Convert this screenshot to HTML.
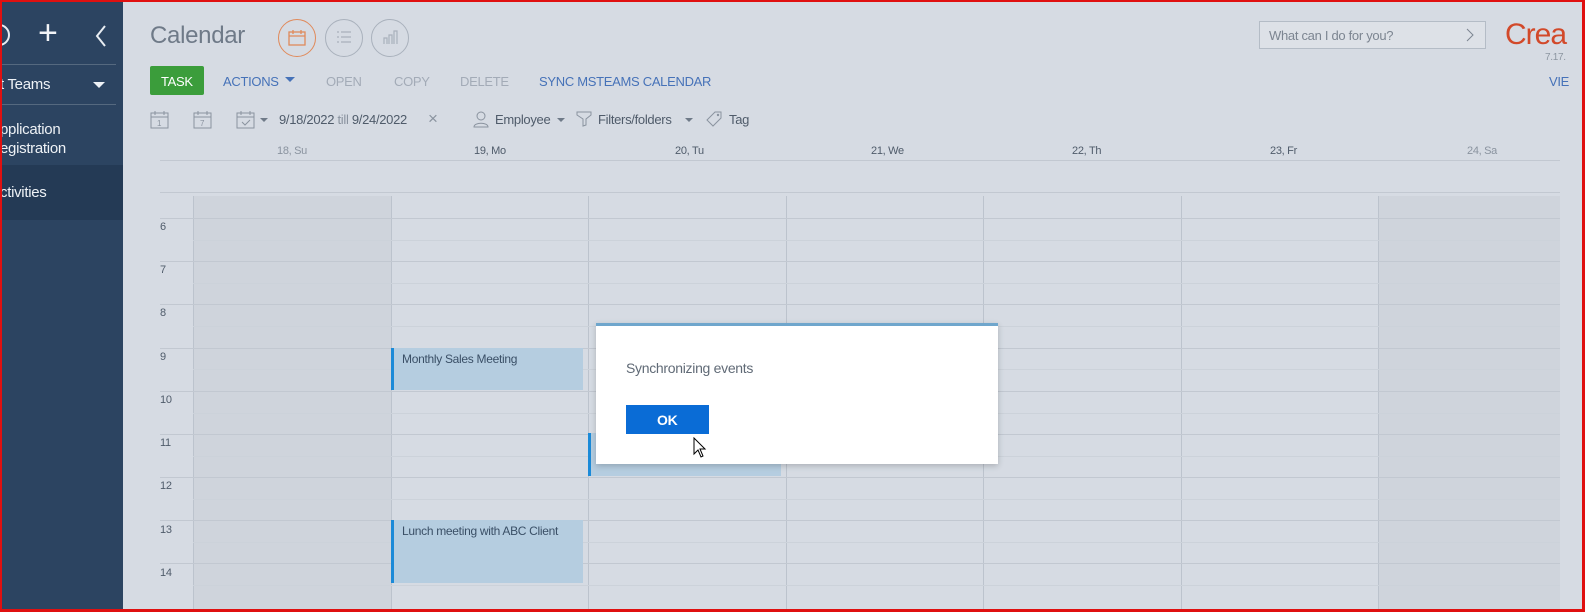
<!DOCTYPE html>
<html><head><meta charset="utf-8"><style>
*{margin:0;padding:0;box-sizing:border-box}
body{width:1585px;height:612px;overflow:hidden;position:relative;background:#d6dbe3;font-family:"Liberation Sans",sans-serif;letter-spacing:-0.3px}
.abs{position:absolute}
.side{left:0;top:0;width:123px;height:612px;background:#2c4461}
.t{position:absolute;white-space:nowrap}
.vl{position:absolute;width:1px;background:#bcc3cd}
.hl{position:absolute;height:1px;background:#c2c8d1}
.hh{position:absolute;height:1px;background:#ccd2da}
.ev{position:absolute;background:#b5cde0;border-left:3px solid #1b8ad8;font-size:12px;color:#3a4f66;padding:4px 8px}
</style></head><body>
<div class="abs side"></div>
<div class="abs" style="left:0;top:165px;width:123px;height:55px;background:#243a55"></div>
<div class="abs" style="left:0;top:64px;width:116px;height:1px;background:#55697f"></div>
<div class="abs" style="left:0;top:104px;width:116px;height:1px;background:#55697f"></div>
<div class="abs" style="left:-12px;top:24px;width:22px;height:22px;border:2px solid #e8edf2;border-radius:50%"></div>
<div class="t" style="left:38px;top:14px;font-size:34px;color:#f2f4f7;font-weight:300">+</div>
<svg class="abs" style="left:94px;top:24px" width="14" height="24"><path d="M11 2 L3 12 L11 22" stroke="#e8edf2" stroke-width="2" fill="none"/></svg>
<div class="t" style="left:0;top:76px;font-size:15px;color:#eef2f6">t Teams</div>
<svg class="abs" style="left:93px;top:82px" width="12" height="8"><path d="M0 0H12L6 6Z" fill="#eef2f6"/></svg>
<div class="t" style="left:0;top:120px;font-size:15px;color:#eef2f6;line-height:19px">pplication<br>egistration</div>
<div class="t" style="left:0;top:184px;font-size:15px;color:#eef2f6">ctivities</div>

<div class="t" style="left:150px;top:22px;font-size:24px;color:#6f7a88;font-weight:300">Calendar</div>
<div class="abs" style="left:278px;top:19px;width:38px;height:38px;border:1px solid #e08a5b;border-radius:50%"></div>
<svg class="abs" style="left:287px;top:28px" width="20" height="20"><rect x="2" y="4" width="16" height="13" fill="none" stroke="#e08a5b" stroke-width="1.3"/><path d="M2 8H18M6 2V6M14 2V6" stroke="#e08a5b" stroke-width="1.3"/></svg>
<div class="abs" style="left:325px;top:19px;width:38px;height:38px;border:1px solid #a9b1bc;border-radius:50%"></div>
<svg class="abs" style="left:335px;top:30px" width="18" height="16"><path d="M2 2h2M2 7h2M2 12h2M6 2h10M6 7h10M6 12h10" stroke="#a9b1bc" stroke-width="1.3"/></svg>
<div class="abs" style="left:371px;top:19px;width:38px;height:38px;border:1px solid #a9b1bc;border-radius:50%"></div>
<svg class="abs" style="left:381px;top:28px" width="18" height="18"><path d="M3 16V10h3v6M8 16V7h3v9M13 16V3h3v13" stroke="#a9b1bc" stroke-width="1.2" fill="none"/></svg>

<div class="abs" style="left:150px;top:66px;width:54px;height:29px;background:#3b9d3b;border-radius:2px"></div>
<div class="t" style="left:161px;top:74px;font-size:13px;color:#fff">TASK</div>
<div class="t" style="left:223px;top:74px;font-size:13px;color:#4672b8">ACTIONS</div>
<svg class="abs" style="left:285px;top:77px" width="10" height="6"><path d="M0 0H10L5 5Z" fill="#4672b8"/></svg>
<div class="t" style="left:326px;top:74px;font-size:13px;color:#a3abb7">OPEN</div>
<div class="t" style="left:394px;top:74px;font-size:13px;color:#a3abb7">COPY</div>
<div class="t" style="left:460px;top:74px;font-size:13px;color:#a3abb7">DELETE</div>
<div class="t" style="left:539px;top:74px;font-size:13px;color:#4672b8">SYNC MSTEAMS CALENDAR</div>
<div class="t" style="left:1549px;top:74px;font-size:13px;color:#4672b8">VIE</div>

<div class="abs" style="left:1259px;top:21px;width:227px;height:28px;border:1px solid #b4bcc6;background:#dde1e7"></div>
<div class="t" style="left:1269px;top:28px;font-size:13px;color:#7c8591">What can I do for you?</div>
<svg class="abs" style="left:1466px;top:28px" width="8" height="14"><path d="M1 1L7 7L1 13" stroke="#7c8591" fill="none"/></svg>
<div class="t" style="left:1505px;top:18px;font-size:30px;color:#d2492a;letter-spacing:-1px">Crea</div>
<div class="t" style="left:1545px;top:52px;font-size:10px;color:#8d96a1">7.17.</div>

<svg class="abs" style="left:150px;top:110px" width="20" height="20"><rect x="1" y="3" width="17" height="15" fill="none" stroke="#8a939f"/><path d="M1 7H18M5 1V5M14 1V5" stroke="#8a939f"/><text x="7" y="16" font-size="8" fill="#8a939f" font-family="Liberation Sans">1</text></svg>
<svg class="abs" style="left:193px;top:110px" width="20" height="20"><rect x="1" y="3" width="17" height="15" fill="none" stroke="#8a939f"/><path d="M1 7H18M5 1V5M14 1V5" stroke="#8a939f"/><text x="7" y="16" font-size="8" fill="#8a939f" font-family="Liberation Sans">7</text></svg>
<svg class="abs" style="left:236px;top:110px" width="20" height="20"><rect x="1" y="3" width="17" height="15" fill="none" stroke="#8a939f"/><path d="M1 7H18M5 1V5M14 1V5M6 12l3 3 5-5" stroke="#8a939f" fill="none"/></svg>
<svg class="abs" style="left:260px;top:118px" width="8" height="5"><path d="M0 0H8L4 4Z" fill="#6f7a88"/></svg>
<div class="t" style="left:279px;top:112px;font-size:13px;color:#4f5b6a">9/18/2022 <span style="color:#8a939f">till</span> 9/24/2022</div>
<div class="t" style="left:428px;top:109px;font-size:17px;color:#8a939f">×</div>
<svg class="abs" style="left:473px;top:110px" width="16" height="18"><circle cx="8" cy="6" r="4" fill="none" stroke="#8a939f"/><path d="M1 17c0-5 14-5 14 0z" fill="none" stroke="#8a939f"/></svg>
<div class="t" style="left:495px;top:112px;font-size:13px;color:#4f5b6a">Employee</div>
<svg class="abs" style="left:557px;top:118px" width="8" height="5"><path d="M0 0H8L4 4Z" fill="#6f7a88"/></svg>
<svg class="abs" style="left:576px;top:110px" width="18" height="18"><path d="M1 2h14v3l-5 4v6l-3 1V9L1 5z" fill="none" stroke="#8a939f"/></svg>
<div class="t" style="left:598px;top:112px;font-size:13px;color:#4f5b6a">Filters/folders</div>
<svg class="abs" style="left:685px;top:118px" width="8" height="5"><path d="M0 0H8L4 4Z" fill="#6f7a88"/></svg>
<svg class="abs" style="left:705px;top:110px" width="18" height="18"><path d="M10 2h6v6l-8 8-6-6z" fill="none" stroke="#8a939f"/><circle cx="13" cy="5" r="1.2" fill="#8a939f"/></svg>
<div class="t" style="left:729px;top:112px;font-size:13px;color:#4f5b6a">Tag</div>

<div class="t" style="left:277px;top:145px;font-size:11px;color:#8a939f">18, Su</div>
<div class="t" style="left:474px;top:145px;font-size:11px;color:#4f5b6a">19, Mo</div>
<div class="t" style="left:675px;top:145px;font-size:11px;color:#4f5b6a">20, Tu</div>
<div class="t" style="left:871px;top:145px;font-size:11px;color:#4f5b6a">21, We</div>
<div class="t" style="left:1072px;top:145px;font-size:11px;color:#4f5b6a">22, Th</div>
<div class="t" style="left:1270px;top:145px;font-size:11px;color:#4f5b6a">23, Fr</div>
<div class="t" style="left:1467px;top:145px;font-size:11px;color:#8a939f">24, Sa</div>
<div class="hl" style="left:160px;top:160px;width:1400px"></div>
<div class="hl" style="left:160px;top:192px;width:1400px"></div>

<div class="abs" style="left:193px;top:196px;width:198px;height:416px;background:#cfd4dc"></div>
<div class="abs" style="left:1378px;top:196px;width:182px;height:416px;background:#cfd4dc"></div>
<div class="vl" style="left:193px;top:196px;height:416px"></div>
<div class="vl" style="left:391px;top:196px;height:416px"></div>
<div class="vl" style="left:588px;top:196px;height:416px"></div>
<div class="vl" style="left:786px;top:196px;height:416px"></div>
<div class="vl" style="left:983px;top:196px;height:416px"></div>
<div class="vl" style="left:1181px;top:196px;height:416px"></div>
<div class="vl" style="left:1378px;top:196px;height:416px"></div>

<div class="hl" style="left:160px;top:218px;width:1400px"></div><div class="hh" style="left:193px;top:240px;width:1367px"></div>
<div class="hl" style="left:160px;top:261px;width:1400px"></div><div class="hh" style="left:193px;top:283px;width:1367px"></div>
<div class="hl" style="left:160px;top:304px;width:1400px"></div><div class="hh" style="left:193px;top:326px;width:1367px"></div>
<div class="hl" style="left:160px;top:348px;width:1400px"></div><div class="hh" style="left:193px;top:369px;width:1367px"></div>
<div class="hl" style="left:160px;top:391px;width:1400px"></div><div class="hh" style="left:193px;top:413px;width:1367px"></div>
<div class="hl" style="left:160px;top:434px;width:1400px"></div><div class="hh" style="left:193px;top:456px;width:1367px"></div>
<div class="hl" style="left:160px;top:477px;width:1400px"></div><div class="hh" style="left:193px;top:499px;width:1367px"></div>
<div class="hl" style="left:160px;top:520px;width:1400px"></div><div class="hh" style="left:193px;top:542px;width:1367px"></div>
<div class="hl" style="left:160px;top:563px;width:1400px"></div><div class="hh" style="left:193px;top:585px;width:1367px"></div>

<div class="t" style="left:160px;top:221px;font-size:11px;color:#4f5b6a">6</div>
<div class="t" style="left:160px;top:264px;font-size:11px;color:#4f5b6a">7</div>
<div class="t" style="left:160px;top:307px;font-size:11px;color:#4f5b6a">8</div>
<div class="t" style="left:160px;top:351px;font-size:11px;color:#4f5b6a">9</div>
<div class="t" style="left:160px;top:394px;font-size:11px;color:#4f5b6a">10</div>
<div class="t" style="left:160px;top:437px;font-size:11px;color:#4f5b6a">11</div>
<div class="t" style="left:160px;top:480px;font-size:11px;color:#4f5b6a">12</div>
<div class="t" style="left:160px;top:524px;font-size:11px;color:#4f5b6a">13</div>
<div class="t" style="left:160px;top:567px;font-size:11px;color:#4f5b6a">14</div>

<div class="ev" style="left:391px;top:348px;width:192px;height:42px">Monthly Sales Meeting</div>
<div class="ev" style="left:588px;top:433px;width:193px;height:43px"></div>
<div class="ev" style="left:391px;top:520px;width:192px;height:63px">Lunch meeting with ABC Client</div>

<div class="abs" style="left:596px;top:323px;width:402px;height:141px;background:#fff;border-top:3px solid #6fa6cc;box-shadow:0 2px 6px rgba(0,0,0,.2)"></div>
<div class="t" style="left:626px;top:360px;font-size:14px;color:#606a76">Synchronizing events</div>
<div class="abs" style="left:626px;top:405px;width:83px;height:29px;background:#0a6cd6"></div>
<div class="t" style="left:657px;top:412px;font-size:14px;color:#fff;font-weight:bold">OK</div>
<svg class="abs" style="left:693px;top:437px" width="14" height="22"><path d="M1 1V17L5 13L8 20L10 19L7 12H12Z" fill="#fff" stroke="#000" stroke-width="1"/></svg>

<div class="abs" style="left:0;top:0;width:1585px;height:612px;border:2px solid #e01010;border-right-width:3px;border-bottom-width:3px"></div>
</body></html>
